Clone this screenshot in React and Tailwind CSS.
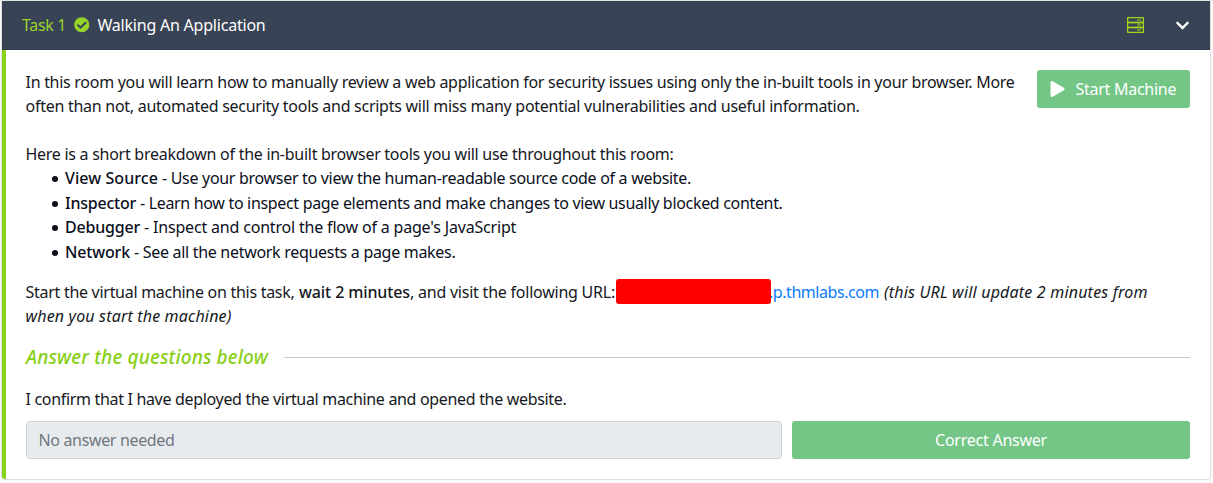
import { FaCheckCircle, FaPlay, FaChevronDown } from "react-icons/fa";

const tools = [
  { name: "View Source", nameClass: "tracking-[0.073px]", text: "- Use your browser to view the human-readable source code of a website.", textClass: "tracking-[-0.304px]" },
  { name: "Inspector", nameClass: "tracking-[-0.234px]", text: "- Learn how to inspect page elements and make changes to view usually blocked content.", textClass: "tracking-[-0.324px]" },
  { name: "Debugger", nameClass: "tracking-[-0.203px]", text: "- Inspect and control the flow of a page's JavaScript", textClass: "tracking-[-0.18px]" },
  { name: "Network", nameClass: "tracking-[-0.161px]", text: "- See all the network requests a page makes.", textClass: "tracking-[-0.3px]" },
];

function ServerIcon() {
  return (
    <svg className="h-4 w-[17px]" viewBox="0 0 17 16" fill="none" stroke="#a2d81c" strokeWidth="1.3">
      <rect x="0.6" y="0.6" width="15.8" height="4.9" rx="0.5" />
      <rect x="0.6" y="5.5" width="15.8" height="5" />
      <rect x="0.6" y="10.5" width="15.8" height="4.9" rx="0.5" />
      <path d="M10 3h4M10 13h4" strokeWidth="1" />
      <path d="M10 8h4" strokeWidth="3" strokeOpacity="0.5" />
    </svg>
  );
}

function TaskHeader() {
  return (
    <header className="flex h-[49px] items-center border-b border-[#2f3950] bg-[#384355] pr-5 pl-5">
      <span className="w-[52px] tracking-[-0.352px] text-[#9ad42c]">Task 1</span>
      <FaCheckCircle className="size-[15.5px] text-[#96d42a]" />
      <h1 className="ml-2 grow tracking-[-0.217px] text-white">Walking An Application</h1>
      <ServerIcon />
      <FaChevronDown className="ml-[31px] size-[15px] text-white" />
    </header>
  );
}

function ToolList() {
  return (
    <ul className="text-[#0b0f1c]">
      {tools.map((tool) => (
        <li key={tool.name} className="flex h-[24.5px] items-center pl-[26px]">
          <span className="mt-[2px] mr-[7.5px] size-[6px] rounded-full bg-[#0b0f1c]" />
          <strong className={`mr-1 font-medium ${tool.nameClass}`}>{tool.name}</strong>
          <span className={tool.textClass}>{tool.text}</span>
        </li>
      ))}
    </ul>
  );
}

export default function App() {
  return (
    <div className="h-[483px] overflow-hidden bg-[#fafafa] pt-px pr-[2px] pl-[1px] font-['Noto_Sans',sans-serif] text-base leading-6 whitespace-nowrap text-[#15181d] shadow-[inset_0_1px_#dfe4df]">
      <section className="h-[479px] overflow-hidden rounded-b-[4px] border-x border-b border-[#dedede] bg-white">
        <TaskHeader />
        <div className="h-[429px] border-l-4 border-[#88d317] pt-5 pr-5 pl-[19.5px]">
          <div className="flex items-start justify-between">
            <p>
              <span className="block tracking-[-0.281px]">In this room you will learn how to manually review a web application for security issues using only the in-built tools in your browser. More</span>
              <span className="block tracking-[-0.267px]">often than not, automated security tools and scripts will miss many potential vulnerabilities and useful information.</span>
            </p>
            <button className="-mb-4 flex h-[38px] w-[153px] items-center rounded-[3px] bg-[#73c686] pl-[13px] text-white">
              <FaPlay className="mr-[10.5px] h-4 w-[15px]" />
              <span className="tracking-[-0.27px]">Start Machine</span>
            </button>
          </div>
          <p className="mt-6 tracking-[-0.273px]">Here is a short breakdown of the in-built browser tools you will use throughout this room:</p>
          <ToolList />
          <p className="mt-4">
            <span className="flex h-6 items-center">
              <span className="mr-[4.5px] tracking-[-0.282px]">Start the virtual machine on this task,</span>
              <strong className="font-medium tracking-[-0.115px]">wait 2 minutes</strong>
              <span className="tracking-[-0.229px]">, and visit the following URL:</span>
              <span className="z-10 -mt-px ml-px h-[25px] w-[155px] rounded-[3px] bg-[#ff0000]" />
              <a className="mr-[5px] -ml-[2px] tracking-[-0.45px] text-[#0b7cff]">.p.thmlabs.com</a>
              <em className="tracking-[0.19px]">(this URL will update 2 minutes from</em>
            </span>
            <em className="block tracking-[0.162px]">when you start the machine)</em>
          </p>
          <div className="mt-4 flex items-center pl-[0.5px]">
            <h2 className="w-[258px] text-[19px] leading-[26px] font-medium tracking-[0.15px] text-[#88cf18] italic">Answer the questions below</h2>
            <hr className="grow border-t border-[#c9c9c9]" />
          </div>
          <p className="mt-[17px] tracking-[-0.321px]">I confirm that I have deployed the virtual machine and opened the website.</p>
          <div className="mt-[10px] flex gap-[10px] pl-[0.5px]">
            <input
              disabled
              placeholder="No answer needed"
              className="h-[38px] w-[756px] rounded-[4px] border border-[#ced4da] bg-[#e8ebee] px-[11.5px] tracking-[-0.346px] placeholder:text-[#6f7780]"
            />
            <button className="h-[38px] grow rounded-[3px] bg-[#73c686] tracking-[-0.237px] text-white">Correct Answer</button>
          </div>
        </div>
      </section>
    </div>
  );
}
